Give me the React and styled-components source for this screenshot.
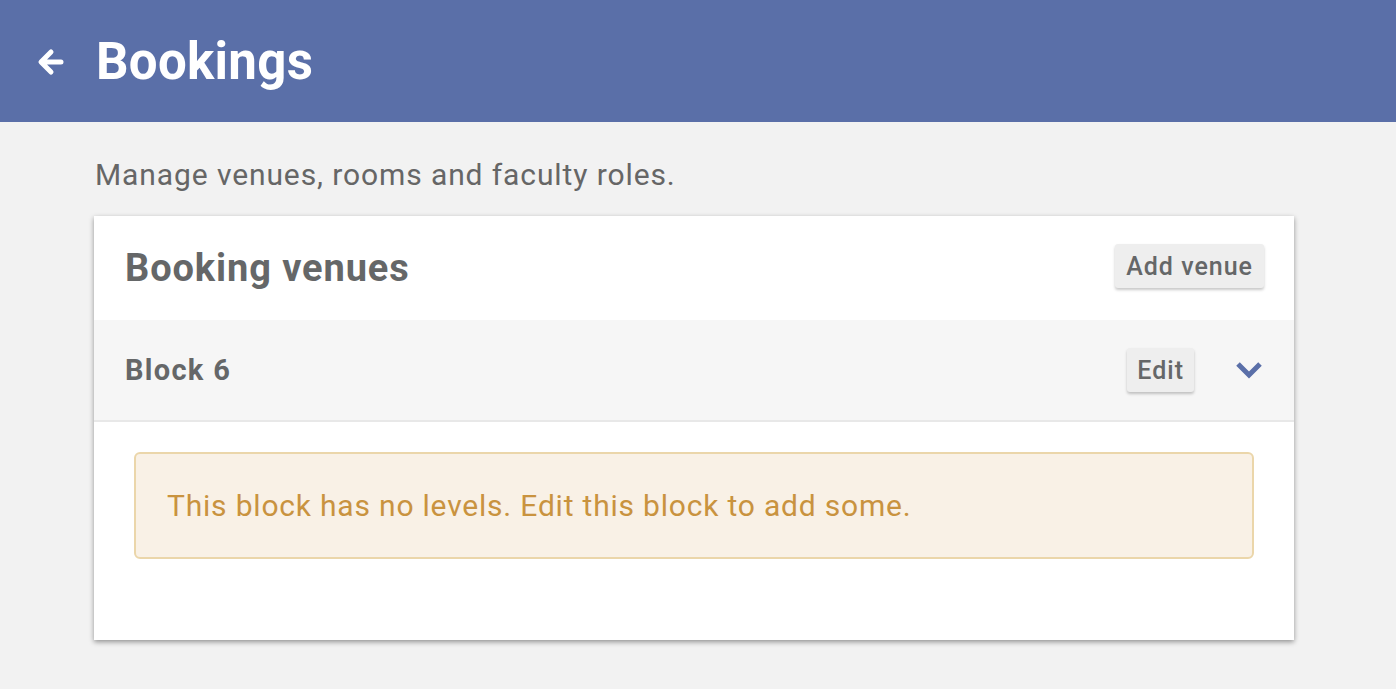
import React from "react"
import styled, { createGlobalStyle } from "styled-components"

const GlobalStyle = createGlobalStyle`
  html, body {
    margin: 0;
    padding: 0;
    min-height: 100%;
    background: #f2f2f2;
    font-family: Roboto, "Liberation Sans", Arial, sans-serif;
  }
`

const TopBar = styled.header`
  height: 122px;
  background: #5a6fa8;
  display: flex;
  align-items: center;
  padding-left: 37px;
  box-sizing: border-box;
  gap: 31px;
  color: #fff;

  h1 {
    margin: 0;
    font-size: 51px;
    font-weight: 700;
    letter-spacing: 0.3px;
  }
`

const BackButton = styled.button`
  border: none;
  background: none;
  padding: 0;
  display: flex;
  cursor: pointer;
  margin-top: 2px;
`

const Main = styled.main`
  width: 1200px;
  margin: 0 0 0 94px;
  padding: 36px 0 48px;
`

const Intro = styled.p`
  margin: 0 0 25px 1px;
  font-size: 30px;
  letter-spacing: 0.9px;
  color: #666;
  line-height: 33px;
`

const Card = styled.section`
  background: #fff;
  box-shadow: 0 2px 5px rgba(0, 0, 0, 0.4);
  padding-bottom: 81px;
`

const CardHeader = styled.div`
  height: 104px;
  display: flex;
  align-items: center;
  justify-content: space-between;
  padding: 0 30px 0 31px;

  h2 {
    margin: 0;
    font-size: 38px;
    font-weight: 700;
    letter-spacing: 0.9px;
    color: #656768;
  }
`

const SmallButton = styled.button`
  border: none;
  background: #eeeeee;
  border-radius: 3px;
  height: 44px;
  margin-bottom: ${(p) => p.$lift || 0}px;
  padding: 0 ${(p) => p.$pad || 11}px;
  font-family: inherit;
  font-size: 25px;
  letter-spacing: 1px;
  font-weight: 500;
  color: #656768;
  box-shadow: 0 2px 3px rgba(0, 0, 0, 0.22);
  cursor: pointer;
`

const BlockRow = styled.div`
  height: 100px;
  background: #f6f6f6;
  border-bottom: 2px solid #e8e8e8;
  display: flex;
  align-items: center;
  padding: 0 30px 0 31px;

  h3 {
    margin: 0;
    flex: 1;
    font-size: 29px;
    font-weight: 700;
    letter-spacing: 1.3px;
    color: #656768;
  }
`

const RowActions = styled.div`
  display: flex;
  align-items: center;
  gap: 40px;
`

const BlockBody = styled.div`
  padding: 30px 40px 0;
`

const Alert = styled.div`
  background: #f9f1e6;
  border: 2px solid #ebd6aa;
  border-radius: 6px;
  color: #c9933f;
  font-size: 30px;
  letter-spacing: 0.8px;
  padding: 34px 31px;
  line-height: 35px;
`

const App = () => {
  return (
    <>
      <GlobalStyle />
      <TopBar>
        <BackButton aria-label="Back">
          <svg width="28" height="28" viewBox="0 0 28 28">
            <path
              d="M24 14H5M14 4L4 14l10 10"
              fill="none"
              stroke="#fff"
              strokeWidth="5"
              strokeLinecap="round"
              strokeLinejoin="round"
            />
          </svg>
        </BackButton>
        <h1>Bookings</h1>
      </TopBar>
      <Main>
        <Intro>Manage venues, rooms and faculty roles.</Intro>
        <Card>
          <CardHeader>
            <h2>Booking venues</h2>
            <SmallButton $lift={4}>Add venue</SmallButton>
          </CardHeader>
          <BlockRow>
            <h3>Block 6</h3>
            <RowActions>
              <SmallButton $pad={10}>Edit</SmallButton>
              <svg width="30" height="20" viewBox="0 0 30 20">
                <path
                  d="M4 4l11 11L26 4"
                  fill="none"
                  stroke="#5a6fa8"
                  strokeWidth="5"
                  strokeLinejoin="miter"
                />
              </svg>
            </RowActions>
          </BlockRow>
          <BlockBody>
            <Alert>This block has no levels. Edit this block to add some.</Alert>
          </BlockBody>
        </Card>
      </Main>
    </>
  )
}

export default App
